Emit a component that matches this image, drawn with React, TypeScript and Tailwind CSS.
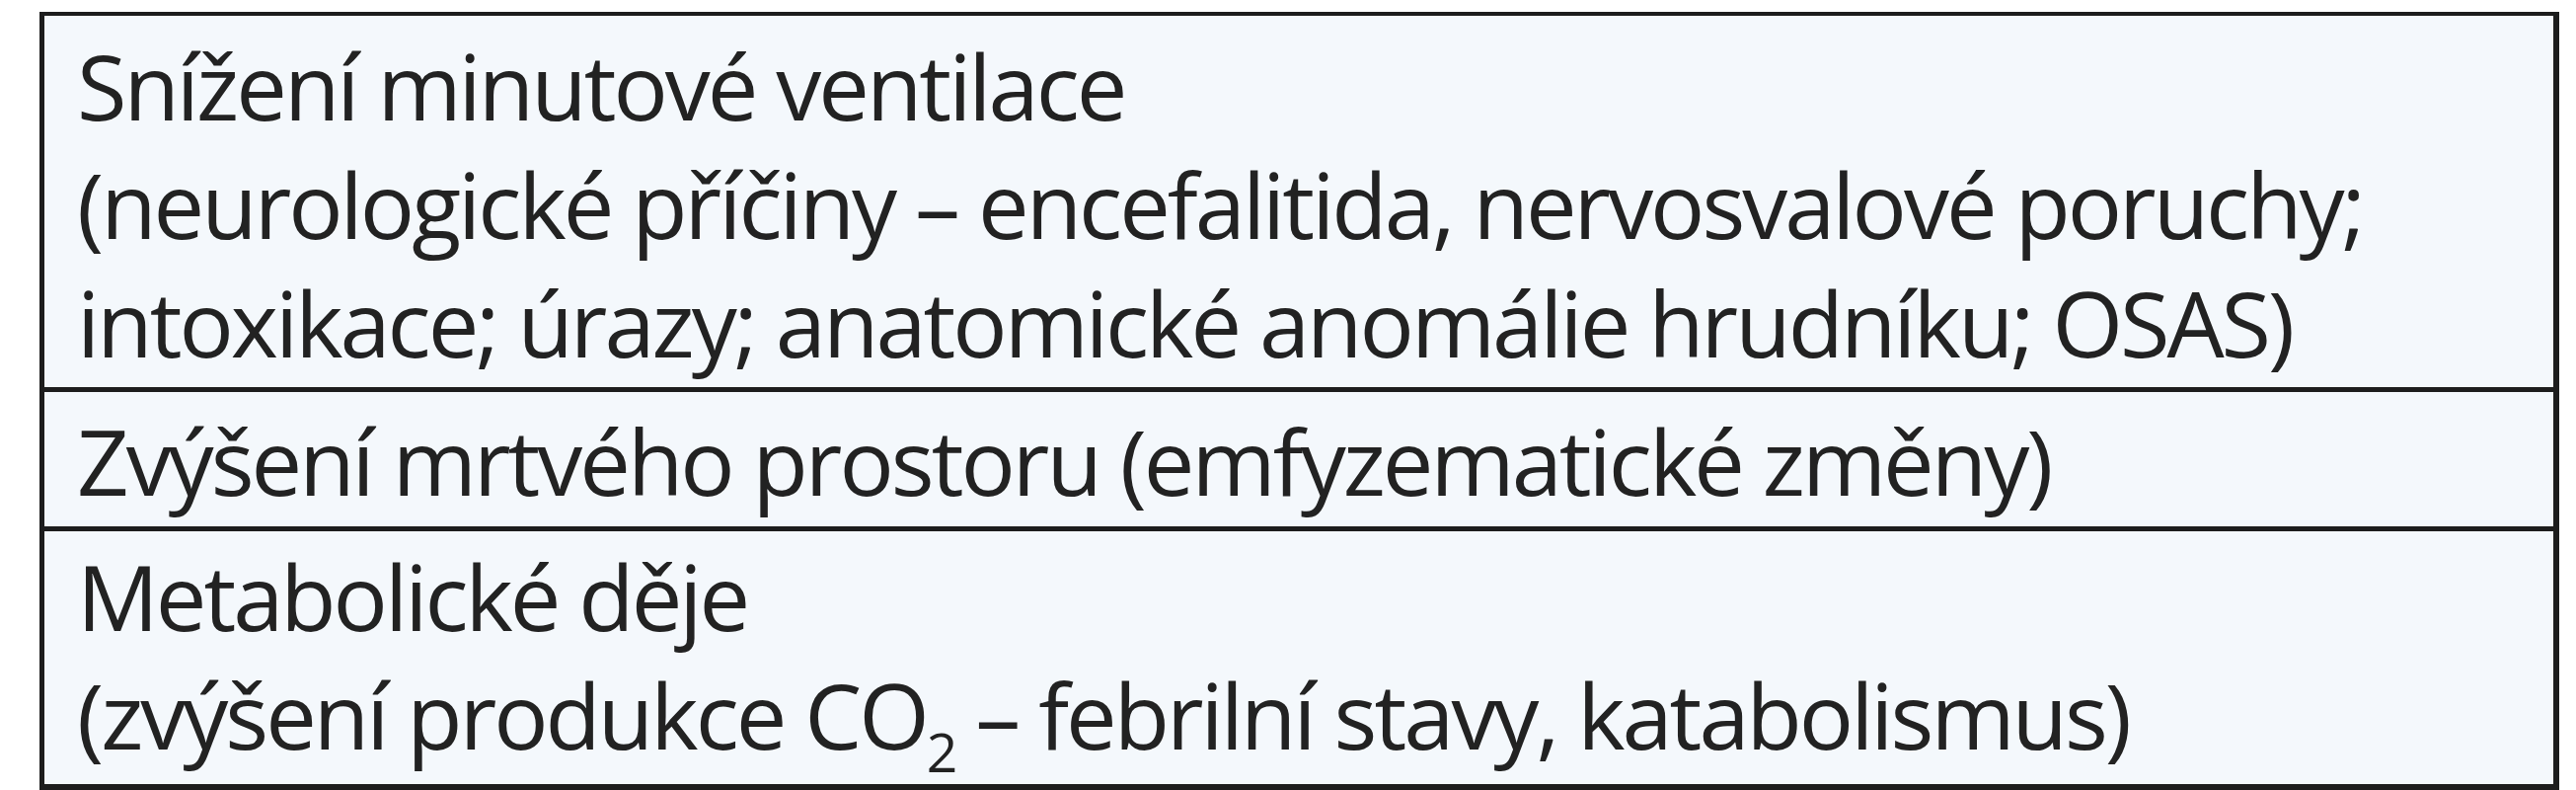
export default function App() {
  return (
    <div className="min-h-[800px] bg-white pl-[40px] pt-[12px]">
      <div
        className="w-[2553px] border-t-[4px] border-r-[6px] border-b-[6px] border-l-[5px] border-[#1d1d1d] bg-[#f4f8fc] text-[92px] leading-[120px] tracking-[-3px] text-[#222222]"
        style={{ fontFamily: '"Open Sans", "Noto Sans", sans-serif' }}
      >
        <div className="pt-[11px] pb-[5px] pl-[33px]">
          <div>Snížení minutové ventilace</div>
          <div>(neurologické příčiny – encefalitida, nervosvalové poruchy;</div>
          <div>intoxikace; úrazy; anatomické anomálie hrudníku; OSAS)</div>
        </div>
        <div className="border-t-[5px] border-[#1d1d1d] pt-[10px] pb-[6px] pl-[33px]">
          <div>Zvýšení mrtvého prostoru (emfyzematické změny)</div>
        </div>
        <div className="border-t-[5px] border-[#1d1d1d] pt-[6px] pb-[10px] pl-[33px]">
          <div>Metabolické děje</div>
          <div>
            (zvýšení produkce CO
            <sub className="bottom-[-0.42em] text-[0.6em]">2</sub> – febrilní stavy, katabolismus)
          </div>
        </div>
      </div>
    </div>
  )
}
